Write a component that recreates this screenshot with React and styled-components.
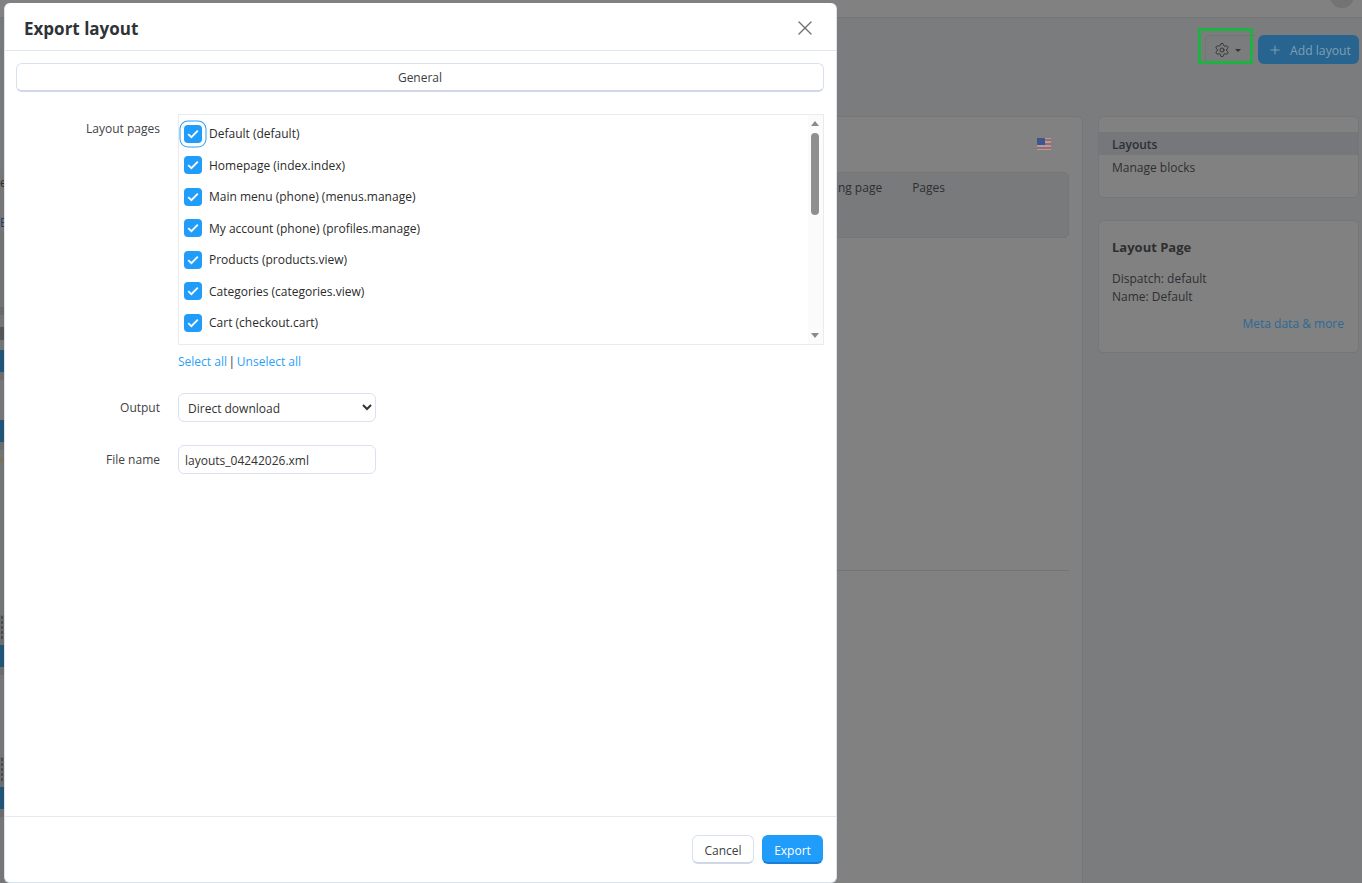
import React from "react";
import styled, { createGlobalStyle } from "styled-components";
import { Settings, Plus, X } from "lucide-react";

const Global = createGlobalStyle`
  html, body { margin: 0; padding: 0; height: 100%; overflow: hidden; }
  body { font-family: "Open Sans", "Noto Sans", "Liberation Sans", sans-serif; font-size: 12px; color: #2f3236; }
  * { box-sizing: border-box; }
`;

const Page = styled.div`
  position: relative;
  width: 1362px;
  height: 883px;
  overflow: hidden;
  background: #7b7c7e;
  display: flex;
  flex-direction: column;
  color: #2e2f31;
`;

const TopBar = styled.div`
  flex: none;
  height: 18px;
  background: #818181;
  border-bottom: 1px solid #757677;
  position: relative;
`;
const Avatar = styled.div`
  position: absolute;
  right: 8px;
  top: -16px;
  width: 24px;
  height: 24px;
  border-radius: 50%;
  background: #737373;
`;

const Shell = styled.div`
  flex: 1;
  display: flex;
  min-height: 0;
`;

const Rail = styled.div`
  flex: none;
  width: 4px;
  display: flex;
  flex-direction: column;
`;
const RailBand = styled.div`
  flex: none;
  height: ${p => p.$h}px;
  background: ${p => p.$c || "#767676"};
  ${p => p.$dots && `background-image: radial-gradient(#4a4a4a 1px, transparent 1.2px); background-size: 4px 5px;`}
`;
const RailText = styled.div`
  flex: none;
  height: 16px;
  line-height: 16px;
  font-size: 12px;
  white-space: nowrap;
  background: #767676;
  color: ${p => p.$c};
  width: 4px;
`;

const Content = styled.div`
  flex: 1;
  min-width: 0;
  padding-right: 3px;
  display: flex;
  flex-direction: column;
`;
const HeaderRow = styled.div`
  flex: none;
  height: 98px;
  display: flex;
  justify-content: flex-end;
  align-items: flex-start;
  padding-top: 17px;
  gap: 5px;
`;
const GearWrap = styled.div`
  width: 55px;
  height: 36px;
  margin-top: -7px;
  border: 3px solid #1fb141;
  padding: 4px 0 0 4px;
`;
const GearBtn = styled.div`
  width: 50px;
  height: 27px;
  display: flex;
  align-items: center;
  justify-content: flex-start;
  padding: 2px 0 0 8px;
  gap: 5px;
  color: #333;
  border-radius: 5px 0 0 0;
  border-left: 1px solid #757575;
  border-top: 1px solid #757575;
`;
const Caret = styled.span`
  width: 0;
  height: 0;
  border-left: 3px solid transparent;
  border-right: 3px solid transparent;
  border-top: 3px solid #333;
`;
const AddBtn = styled.div`
  width: 101px;
  height: 29px;
  border-radius: 6px;
  background: #27648f;
  color: #7f9fb6;
  font-size: 12.2px;
  display: flex;
  align-items: center;
  padding: 1px 0 0 10px;
  gap: 8px;
`;

const Columns = styled.div`
  flex: 1;
  display: flex;
  gap: 15px;
  min-height: 0;
`;
const MainCard = styled.div`
  flex: 1;
  min-width: 0;
  margin-left: 160px;
  background: #818181;
  border: 1px solid #757677;
  border-bottom: 0;
  border-radius: 5px 5px 0 0;
  padding: 19px 13px 0 12px;
  display: flex;
  flex-direction: column;
`;
const FlagRow = styled.div`
  height: 36px;
  display: flex;
  justify-content: flex-end;
  padding-right: 18px;
  padding-top: 2px;
`;
const TablePanel = styled.div`
  height: 66px;
  background: #797a7c;
  border: 1px solid #757677;
  border-radius: 5px;
  display: flex;
  justify-content: flex-end;
  padding: 7px 123px 0 0;
  gap: 30px;
  line-height: 16px;
`;
const Divider = styled.div`
  margin-top: 332px;
  height: 1px;
  background: #747475;
`;

const SideCol = styled.div`
  flex: none;
  width: 261px;
  display: flex;
  flex-direction: column;
  gap: 22px;
`;
const SideCard = styled.div`
  background: #818181;
  border: 1px solid #757677;
  border-radius: 5px;
  height: ${p => p.$h}px;
`;
const NavItem = styled.div`
  height: 23px;
  padding: 2px 0 0 13px;
  display: flex;
  align-items: center;
  background: ${p => (p.$active ? "#76777b" : "transparent")};
  font-weight: ${p => (p.$active ? 600 : 400)};
  margin-top: ${p => p.$mt || 0}px;
`;
const InfoBody = styled.div`
  padding: 17px 14px 0 13px;
  line-height: 18px;
`;
const InfoTitle = styled.div`
  font-weight: 700;
  font-size: 13px;
  margin-bottom: 14px;
`;
const MetaLink = styled.div`
  color: #2a6a97;
  text-align: right;
  margin-top: 9px;
`;

/* dialog */
const Modal = styled.div`
  position: absolute;
  left: 4px;
  top: 3px;
  width: 833px;
  height: 880px;
  background: #fff;
  border: 1px solid #dbe3f1;
  border-top: 0;
  border-radius: 6px;
  display: flex;
  flex-direction: column;
  color: #333;
`;
const ModalHead = styled.div`
  flex: none;
  height: 48px;
  border-bottom: 1px solid #dfe5f2;
  display: flex;
  align-items: center;
  justify-content: space-between;
  padding: 3px 19px 0 19px;
`;
const Title = styled.h1`
  margin: 0;
  font-size: 17px;
  font-weight: 700;
  color: #2f3338;
`;
const Close = styled.div`
  display: flex;
  color: #6d7074;
`;
const ModalBody = styled.div`
  flex: 1;
  min-height: 0;
  padding: 12px 12px 0 11px;
`;
const TabBtn = styled.div`
  height: 29px;
  border: 1px solid #d9e0ee;
  border-bottom: 2px solid #d0d7e6;
  border-radius: 6px;
  display: flex;
  align-items: center;
  justify-content: center;
  color: #3a3d41;
`;
const Form = styled.div`
  margin-top: 22px;
  display: flex;
  flex-direction: column;
`;
const FormRow = styled.div`
  display: grid;
  grid-template-columns: 144px 1fr;
  column-gap: 18px;
  margin-top: ${p => p.$mt || 0}px;
`;
const Label = styled.label`
  text-align: right;
  line-height: 16px;
  padding-top: ${p => p.$pt || 0}px;
  color: #3f4246;
`;
const ListBox = styled.div`
  position: relative;
  height: 231px;
  border: 1px solid #e9ebef;
  overflow: hidden;
  padding: 3px 0 0 5px;
`;
const CheckRow = styled.div`
  height: 31.5px;
  display: flex;
  align-items: center;
  gap: 7px;
  color: #2b2b2b;
`;
const Box = styled.span`
  flex: none;
  width: 18px;
  height: 18px;
  border-radius: 4px;
  background: #209cfb;
  display: flex;
  align-items: center;
  justify-content: center;
  ${p => p.$focus && `box-shadow: 0 0 0 3.5px #fff, 0 0 0 4.5px #2a9ffa;`}
`;
const ScrollTrack = styled.div`
  position: absolute;
  right: 0;
  top: 0;
  bottom: 0;
  width: 15px;
  background: #fbfbfb;
`;
const ScrollUp = styled.div`
  position: absolute;
  top: 6px;
  left: 3px;
  width: 0;
  height: 0;
  border-left: 4px solid transparent;
  border-right: 4px solid transparent;
  border-bottom: 5px solid #8a8a8a;
`;
const ScrollDown = styled.div`
  position: absolute;
  bottom: 6px;
  left: 3px;
  width: 0;
  height: 0;
  border-left: 4px solid transparent;
  border-right: 4px solid transparent;
  border-top: 5px solid #8a8a8a;
`;
const ScrollThumb = styled.div`
  position: absolute;
  top: 18px;
  left: 3px;
  width: 8px;
  height: 82px;
  border-radius: 4px;
  background: #8f8f8f;
`;
const LinkLine = styled.div`
  margin-top: 9px;
  line-height: 16px;
  color: #333;
`;
const Sep = styled.span`
  margin: 0 -1.5px;
`;
const TextLink = styled.a`
  color: #2a9ffa;
  text-decoration: none;
`;
const Select = styled.select`
  display: block;
  width: 198px;
  height: 29px;
  border: 1px solid #dbe1ee;
  border-radius: 6px;
  background: #fff;
  padding: 1px 0 0 5px;
  font: inherit;
  color: #333;
`;
const Input = styled.input`
  display: block;
  width: 198px;
  height: 29px;
  border: 1px solid #dbe1ee;
  border-radius: 6px;
  background: #fff;
  padding: 1px 6px 0;
  font: inherit;
  color: #333;
`;
const ModalFoot = styled.div`
  flex: none;
  height: 66px;
  border-top: 1px solid #e6e9f0;
  display: flex;
  justify-content: flex-end;
  align-items: flex-start;
  padding: 18px 13px 0 0;
  gap: 8px;
`;
const Btn = styled.button`
  height: 29px;
  width: ${p => p.$w}px;
  border-radius: 6px;
  font: inherit;
  padding: 2px 0 0;
  border: 1px solid ${p => (p.$primary ? "#209cfb" : "#d9e0ee")};
  border-bottom: 2px solid ${p => (p.$primary ? "#1a80d6" : "#d0d7e6")};
  background: ${p => (p.$primary ? "#209cfb" : "#fff")};
  color: ${p => (p.$primary ? "#fff" : "#3a3d41")};
`;

const Check = () => (
  <svg width="12" height="10" viewBox="0 0 12 10" fill="none">
    <path d="M1.2 5.2 L4.4 8.2 L10.8 1.6" stroke="#fff" strokeWidth="1.8" />
  </svg>
);

const Flag = () => (
  <svg width="14" height="12" viewBox="0 0 14 12">
    <rect width="14" height="12" fill="#a8a0a4" />
    <rect y="1" width="14" height="2" fill="#a5686a" />
    <rect y="5" width="14" height="2" fill="#a5686a" />
    <rect y="9" width="14" height="2" fill="#a5686a" />
    <rect width="8" height="7" fill="#3f5590" />
  </svg>
);

const pages = [
  "Default (default)",
  "Homepage (index.index)",
  "Main menu (phone) (menus.manage)",
  "My account (phone) (profiles.manage)",
  "Products (products.view)",
  "Categories (categories.view)",
  "Cart (checkout.cart)",
];

const BLUE = "#215578";
const DARK = "#6c6c6c";

export default function App() {
  return (
    <Page>
      <Global />
      <TopBar><Avatar /></TopBar>
      <Shell>
        <Rail>
          <RailBand $h={157} $c="#777879" />
          <RailText $c="#2a2a2a">e</RailText>
          <RailBand $h={24} $c="#767676" />
          <RailText $c="#1d3f5c">E</RailText>
          <RailBand $h={76} $c="#737374" />
          <RailBand $h={8} $c="#6a6a6a" />
          <RailBand $h={12} $c="#747474" />
          <RailBand $h={13} $c="#555555" />
          <RailBand $h={10} $c="#747474" />
          <RailBand $h={22} $c={BLUE} />
          <RailBand $h={8} $c={DARK} />
          <RailBand $h={40} $c="#767676" />
          <RailBand $h={22} $c={BLUE} />
          <RailBand $h={8} $c={DARK} />
          <RailBand $h={8} $c="#737474" />
          <RailBand $h={4} $c="#7a7152" />
          <RailBand $h={153} $c="#737474" />
          <RailBand $h={26} $c={DARK} $dots />
          <RailBand $h={4} $c={DARK} />
          <RailBand $h={22} $c={BLUE} />
          <RailBand $h={8} $c={DARK} />
          <RailBand $h={82} $c="#767676" />
          <RailBand $h={25} $c={DARK} $dots />
          <RailBand $h={5} $c={DARK} />
          <RailBand $h={22} $c={BLUE} />
          <RailBand $h={8} $c={DARK} />
          <RailBand $h={66} $c="#767676" />
        </Rail>
        <Content>
          <HeaderRow>
            <GearWrap>
              <GearBtn>
                <Settings size={16} strokeWidth={1.4} />
                <Caret />
              </GearBtn>
            </GearWrap>
            <AddBtn><Plus size={14} strokeWidth={1.8} />Add layout</AddBtn>
          </HeaderRow>
          <Columns>
            <MainCard>
              <FlagRow><Flag /></FlagRow>
              <TablePanel><span>Landing page</span><span>Pages</span></TablePanel>
              <Divider />
            </MainCard>
            <SideCol>
              <SideCard $h={82}>
                <NavItem $active $mt={15}>Layouts</NavItem>
                <NavItem>Manage blocks</NavItem>
              </SideCard>
              <SideCard $h={133}>
                <InfoBody>
                  <InfoTitle>Layout Page</InfoTitle>
                  <div>Dispatch: default</div>
                  <div>Name: Default</div>
                  <MetaLink>Meta data &amp; more</MetaLink>
                </InfoBody>
              </SideCard>
            </SideCol>
          </Columns>
        </Content>
      </Shell>

      <Modal>
        <ModalHead>
          <Title>Export layout</Title>
          <Close><X size={24} strokeWidth={1.4} /></Close>
        </ModalHead>
        <ModalBody>
          <TabBtn>General</TabBtn>
          <Form>
            <FormRow>
              <Label $pt={7}>Layout pages</Label>
              <div>
                <ListBox>
                  {pages.map((t, i) => (
                    <CheckRow key={t}>
                      <Box $focus={i === 0}><Check /></Box>
                      {t}
                    </CheckRow>
                  ))}
                  <ScrollTrack>
                    <ScrollUp />
                    <ScrollThumb />
                    <ScrollDown />
                  </ScrollTrack>
                </ListBox>
                <LinkLine>
                  <TextLink>Select all</TextLink> <Sep>|</Sep> <TextLink>Unselect all</TextLink>
                </LinkLine>
              </div>
            </FormRow>
            <FormRow $mt={23}>
              <Label $pt={7}>Output</Label>
              <Select defaultValue="d"><option value="d">Direct download</option></Select>
            </FormRow>
            <FormRow $mt={23}>
              <Label $pt={7}>File name</Label>
              <Input defaultValue="layouts_04242026.xml" />
            </FormRow>
          </Form>
        </ModalBody>
        <ModalFoot>
          <Btn $w={62}>Cancel</Btn>
          <Btn $w={61} $primary>Export</Btn>
        </ModalFoot>
      </Modal>
    </Page>
  );
}
